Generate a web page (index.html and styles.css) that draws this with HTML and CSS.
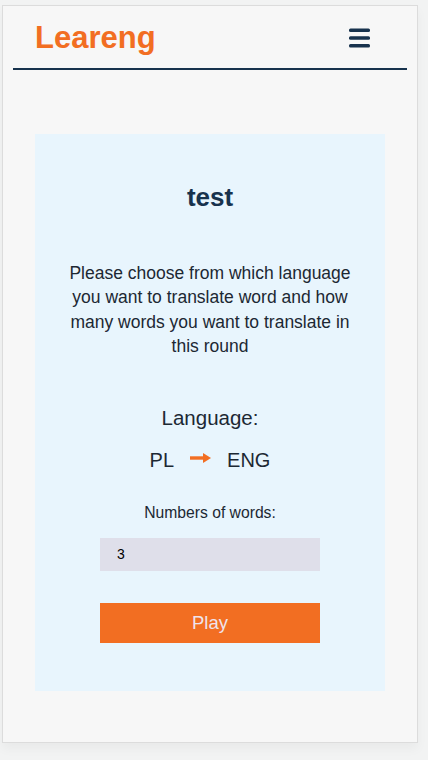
FILE: index.html
```html
<!DOCTYPE html>
<html lang="en">
<head>
<meta charset="utf-8">
<title>Leareng</title>
<link rel="stylesheet" href="styles.css">
</head>
<body>
<div class="frame">
  <header class="header">
    <span class="logo">Leareng</span>
    <button class="menu" aria-label="Menu">
      <svg width="21" height="20" viewBox="0 0 21 20"><rect x="0" y="0.5" width="21" height="3.5" rx="1.5"/><rect x="0" y="8.2" width="21" height="3.5" rx="1.5"/><rect x="0" y="15.9" width="21" height="3.5" rx="1.5"/></svg>
    </button>
  </header>
  <main class="card">
    <h1 class="title">test</h1>
    <p class="intro">Please choose from which language you want to translate word and how many words you want to translate in this round</p>
    <div class="lang-label">Language:</div>
    <div class="lang-row">
      <span>PL</span>
      <svg class="arrow" width="21" height="10" viewBox="0 0 21 10"><rect x="0" y="3.3" width="15" height="3.4" fill="#f26e22"/><polygon points="13,0 21,5 13,10" fill="#f26e22"/></svg>
      <span>ENG</span>
    </div>
    <label class="num-label" for="num">Numbers of words:</label>
    <input class="num-input" id="num" type="text" value="3">
    <button class="play">Play</button>
  </main>
</div>
</body>
</html>
```

FILE: styles.css
```css
* { box-sizing: border-box; }
html, body { margin: 0; padding: 0; }
body {
  background: #f2f3f3;
  font-family: "Liberation Sans", Arial, sans-serif;
  width: 428px;
  height: 760px;
  overflow: hidden;
}
.frame {
  margin: 5px 0 0 2px;
  width: 416px;
  height: 738px;
  background: #f7f7f7;
  border: 1px solid #dcdcdc;
  box-shadow: 0 6px 10px rgba(0, 0, 0, 0.04);
  display: flex;
  flex-direction: column;
}
.header {
  margin: 0 10px;
  height: 64px;
  padding: 1px 37px 0 22px;
  border-bottom: 2px solid #17324d;
  display: flex;
  align-items: center;
  justify-content: space-between;
}
.logo {
  color: #f26e22;
  font-weight: bold;
  font-size: 31px;
}
.menu {
  border: 0;
  background: none;
  padding: 0;
  display: flex;
  fill: #17324d;
}
.card {
  margin: 64px 32px 0;
  background: #e8f5fd;
  padding: 48px 30px 48px;
  display: flex;
  flex-direction: column;
  align-items: center;
  text-align: center;
}
.title {
  margin: 0;
  font-size: 26px;
  line-height: 30px;
  color: #17324d;
  font-weight: bold;
}
.intro {
  margin: 49px 0 0;
  font-size: 17.5px;
  line-height: 24.4px;
  color: #1c2833;
}
.lang-label {
  margin-top: 47px;
  font-size: 20.5px;
  color: #1c2833;
}
.lang-row {
  margin-top: 19px;
  display: flex;
  align-items: center;
  gap: 16px;
  font-size: 20px;
  color: #1c2833;
}
.arrow { display: block; margin-top: -4px; }
.num-label {
  margin-top: 32px;
  font-size: 15.7px;
  color: #1c2833;
}
.num-input {
  margin-top: 16px;
  width: 220px;
  height: 33px;
  border: 0;
  background: #dfdfea;
  padding: 0 0 0 17px;
  font-family: "Liberation Sans", Arial, sans-serif;
  font-size: 14px;
  color: #000;
  outline: none;
}
.play {
  margin-top: 32px;
  width: 220px;
  height: 40px;
  border: 0;
  background: #f26e22;
  color: #efe3ec;
  font-family: "Liberation Sans", Arial, sans-serif;
  font-size: 18.5px;
  padding: 0;
}
```
